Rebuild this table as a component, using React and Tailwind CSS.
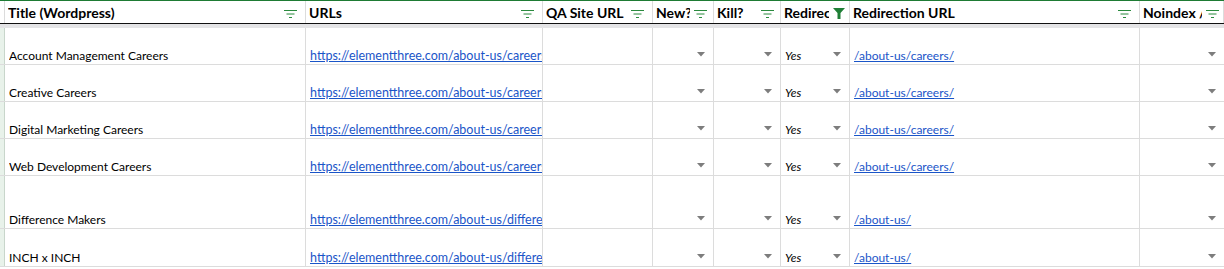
import React from "react";

const cols = "grid-cols-[5px_301px_237px_110px_61px_67px_69px_290px_1fr]";

const rows = [
  { title: "Account Management Careers", url: "https://elementthree.com/about-us/careers/account-management/", redirect: "/about-us/careers/", h: "h-[37px]" },
  { title: "Creative Careers", url: "https://elementthree.com/about-us/careers/creative/", redirect: "/about-us/careers/", h: "h-[37px]" },
  { title: "Digital Marketing Careers", url: "https://elementthree.com/about-us/careers/digital-marketing/", redirect: "/about-us/careers/", h: "h-[37px]" },
  { title: "Web Development Careers", url: "https://elementthree.com/about-us/careers/web-development/", redirect: "/about-us/careers/", h: "h-[37px]" },
  { title: "Difference Makers", url: "https://elementthree.com/about-us/difference-makers/", redirect: "/about-us/", h: "h-[53px]" },
  { title: "INCH x INCH", url: "https://elementthree.com/about-us/difference-makers/inch-x-inch/", redirect: "/about-us/", h: "h-[38px]" },
];

function FilterIcon() {
  return (
    <svg width="13" height="8" viewBox="0 0 13 8" className="shrink-0 mt-[3px]">
      <rect x="0" y="0" width="13" height="1" fill="#2a8a3e" />
      <rect x="2.5" y="3.5" width="8" height="1" fill="#2a8a3e" />
      <rect x="5" y="7" width="3" height="1" fill="#2a8a3e" />
    </svg>
  );
}

function FunnelIcon() {
  return (
    <svg width="12" height="11" viewBox="0 0 12 11" className="shrink-0 mt-[3px]">
      <path d="M0 0 H12 L7.5 5 V11 H4.5 V5 Z" fill="#1f7f36" />
    </svg>
  );
}

function Arrow() {
  return (
    <svg width="8" height="5" viewBox="0 0 8 5" className="shrink-0">
      <path d="M0 0 H8 L4 4.5 Z" fill="#7d7d7d" />
    </svg>
  );
}

function Head({ label, active, pr = "pr-[8px]" }) {
  return (
    <div className={`flex items-center gap-[4px] border-r border-[#dcdcdc] pl-[3px] ${pr} overflow-hidden`}>
      <span className="flex-1 min-w-0 whitespace-nowrap overflow-hidden font-bold text-[14px] text-black">{label}</span>
      {active ? <FunnelIcon /> : <FilterIcon />}
    </div>
  );
}

function Cell({ children, arrow, pr = "pr-[8px]", border = "border-r" }) {
  return (
    <div className={`flex items-end ${border} border-[#dcdcdc] pb-[1px] pl-[4px] ${pr} overflow-hidden`}>
      <div className="flex-1 min-w-0 whitespace-nowrap overflow-hidden leading-[14px]">{children}</div>
      {arrow && (
        <div className="pb-[6px]">
          <Arrow />
        </div>
      )}
    </div>
  );
}

export default function App() {
  return (
    <div className="w-[1224px] h-[269px] overflow-hidden bg-white text-[12px] text-black font-['Lato','Liberation_Sans',sans-serif]">
      <div className="h-px bg-[#1e7b34]" />
      {/* header */}
      <div className={`grid ${cols} h-[23px] border-b border-[#111]`}>
        <div className="border-r border-[#dcdcdc]" />
        <Head label="Title (Wordpress)" />
        <Head label="URLs" />
        <Head label="QA Site URL" />
        <Head label="New?" pr="pr-[6px]" />
        <Head label="Kill?" pr="pr-[6px]" />
        <Head label="Redirect?" active pr="pr-[4px]" />
        <Head label="Redirection URL" />
        <Head label="Noindex / Nofollow" pr="pr-[4px]" />
      </div>
      <div className="h-[4px] bg-[#e4e4e6]" />
      {rows.map((r) => (
        <div key={r.title} className={`grid ${cols} ${r.h} border-b border-[#dcdcdc]`}>
          <div className="bg-[#e8f2ea] border-r border-[#c8d6cb]" />
          <Cell>{r.title}</Cell>
          <Cell pr="pr-0">
            <span className="text-[#1a55c8] underline text-[12.5px]">{r.url}</span>
          </Cell>
          <Cell />
          <Cell arrow />
          <Cell arrow />
          <Cell arrow>
            <span className="italic">Yes</span>
          </Cell>
          <Cell>
            <span className="text-[#1a55c8] underline">{r.redirect}</span>
          </Cell>
          <Cell arrow border="border-r-0" />
        </div>
      ))}
    </div>
  );
}
